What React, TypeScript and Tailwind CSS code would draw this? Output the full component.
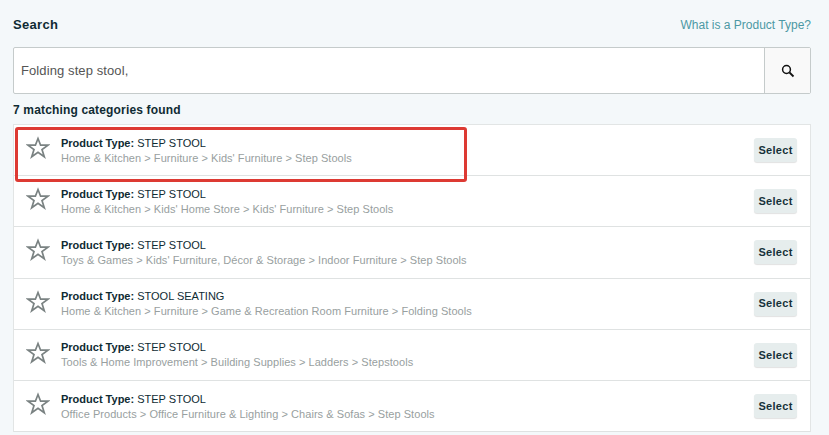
const rows = [
    { type: 'STEP STOOL', path: "Home & Kitchen > Furniture > Kids' Furniture > Step Stools" },
    { type: 'STEP STOOL', path: "Home & Kitchen > Kids' Home Store > Kids' Furniture > Step Stools" },
    { type: 'STEP STOOL', path: "Toys & Games > Kids' Furniture, Décor & Storage > Indoor Furniture > Step Stools" },
    { type: 'STOOL SEATING', path: 'Home & Kitchen > Furniture > Game & Recreation Room Furniture > Folding Stools' },
    { type: 'STEP STOOL', path: 'Tools & Home Improvement > Building Supplies > Ladders > Stepstools' },
    { type: 'STEP STOOL', path: 'Office Products > Office Furniture & Lighting > Chairs & Sofas > Step Stools' },
];

const Star = () => (
    <svg width="24" height="24" viewBox="0 0 24 24" className="mb-[4px] shrink-0">
        <polygon
            points="12,2.5 14.6,9.2 22,9.2 16,13.6 18.3,20.8 12,16.4 5.7,20.8 8,13.6 2,9.2 9.4,9.2"
            fill="none"
            stroke="#7a8282"
            strokeWidth="1.7"
        />
    </svg>
);

const SearchIcon = () => (
    <svg width="14" height="14" viewBox="0 0 14 14">
        <circle cx="5.5" cy="5.5" r="3.9" fill="none" stroke="#111" strokeWidth="1.5" />
        <path d="M8.5 8.5 L12.5 12.5" stroke="#111" strokeWidth="1.8" />
    </svg>
);

const App = () => {
    return (
        <div className="relative h-[435px] w-[829px] overflow-hidden bg-[#f4f8fa] pt-[16px] pr-[18px] pl-[13px] font-['Liberation_Sans',sans-serif] text-[#0f2b33]">
            <div className="flex h-[17px] items-center justify-between">
                <h5 className="text-[13px] font-bold tracking-[0.3px]">Search</h5>
                <a className="text-[12px] text-[#4c98a4]">What is a Product Type?</a>
            </div>
            <div className="mt-[14px] flex h-[47px] rounded-[2px] border border-[#c5cbcb] bg-white">
                <div className="flex flex-1 items-center pl-[7px] text-[13px] tracking-[0.1px] text-[#555]">Folding step stool,</div>
                <div className="flex w-[46px] items-center justify-center border-l border-[#c5cbcb] bg-[#f9f9f9]">
                    <SearchIcon />
                </div>
            </div>
            <div className="mt-[9px] h-[15px] text-[12px] leading-[15px] font-bold tracking-[0.16px]">7 matching categories found</div>
            <div className="mt-[6px] border border-b-0 border-[#e2e5e5] bg-white">
                {rows.map((row, index) => (
                    <div key={index} className="flex h-[51.2px] items-center border-b border-[#dfe2e2] pr-[13px] pl-[12px]">
                        <Star />
                        <div className="ml-[11px] flex-1">
                            <div className="text-[11px] leading-[14px]">
                                <span className="font-bold">Product Type:</span> {row.type}
                            </div>
                            <div className="mt-[1px] text-[11px] leading-[14px] tracking-[0.05px] text-[#98a0a0]">{row.path}</div>
                        </div>
                        <button className="h-[24px] w-[43px] rounded-[3px] bg-[#e6eded] text-[11px] font-bold tracking-[0.3px] text-[#16323a] shadow-[0_1px_1px_rgba(0,0,0,0.12)]">
                            Select
                        </button>
                    </div>
                ))}
            </div>
            <div className="absolute top-[127px] left-[15px] h-[55px] w-[452px] rounded-[3px] border-[3px] border-[#dd3a33]" />
        </div>
    );
};

export default App;
